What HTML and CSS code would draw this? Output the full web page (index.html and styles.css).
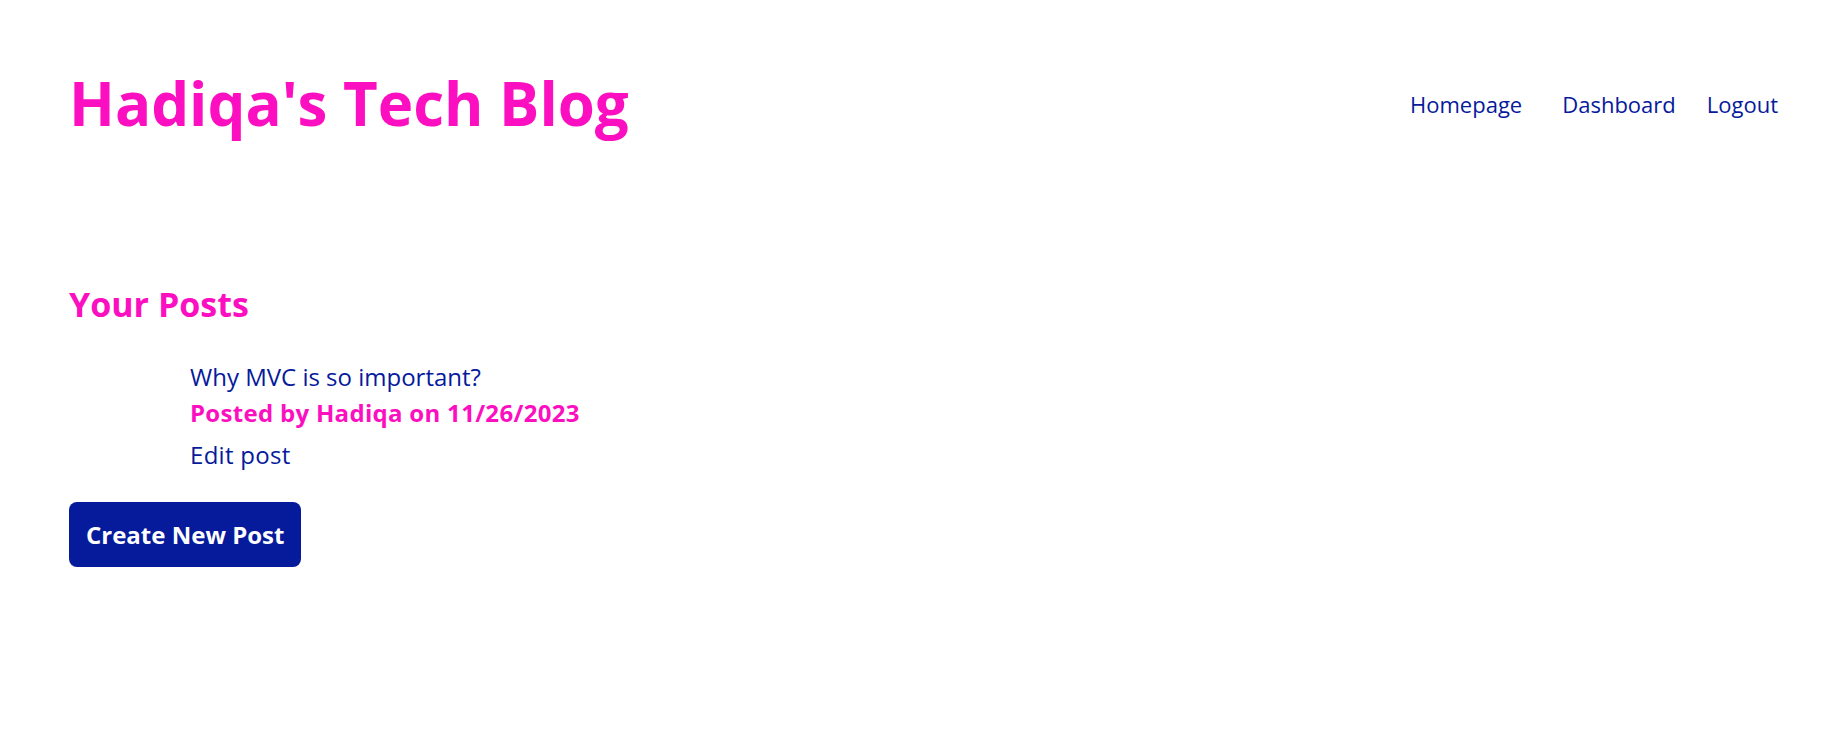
FILE: index.html
```html
<!DOCTYPE html>
<html lang="en">
<head>
<meta charset="utf-8">
<title>Hadiqa's Tech Blog</title>
<link rel="stylesheet" href="styles.css">
</head>
<body>
<header class="site-header">
  <h1 class="brand">Hadiqa's Tech Blog</h1>
  <nav class="nav">
    <a class="nav-link nav-home" href="#">Homepage</a>
    <a class="nav-link nav-dash" href="#">Dashboard</a>
    <a class="nav-link" href="#">Logout</a>
  </nav>
</header>
<main class="content">
  <h2 class="section-title">Your Posts</h2>
  <ul class="post-list">
    <li class="post">
      <a class="post-title" href="#">Why MVC is so important?</a>
      <p class="post-meta">Posted by Hadiqa on 11/26/2023</p>
      <a class="post-edit" href="#">Edit post</a>
    </li>
  </ul>
  <button class="btn" type="button">Create New Post</button>
</main>
</body>
</html>
```
FILE: styles.css
```css
* { box-sizing: border-box; }
body {
  margin: 0;
  background: #ffffff;
  font-family: "Comic Sans MS", "Open Sans", sans-serif;
  color: #061a9c;
}
.site-header {
  display: flex;
  justify-content: space-between;
  align-items: flex-start;
  padding: 73px 55px 0 69px;
}
.brand {
  margin: 0;
  font-size: 60px;
  line-height: 60px;
  font-weight: 700;
  color: #fc0fc0;
}
.nav {
  display: flex;
  margin-top: 19px;
}
.nav-link {
  font-size: 22px;
  line-height: 24px;
  color: #061a9c;
  text-decoration: none;
}
.nav-home { margin-right: 40px; }
.nav-dash { margin-right: 31px; }
.content {
  padding: 0 69px;
}
.section-title {
  margin: 154px 0 0;
  font-size: 34px;
  line-height: 34px;
  font-weight: 700;
  color: #fc0fc0;
}
.post-list {
  list-style: none;
  margin: 44px 0 0;
  padding: 0 0 0 121px;
}
.post {
  display: flex;
  flex-direction: column;
  align-items: flex-start;
}
.post-title {
  font-size: 24px;
  line-height: 24px;
  color: #061a9c;
  text-decoration: none;
}
.post-meta {
  margin: 12px 0 0;
  font-size: 24px;
  line-height: 24px;
  font-weight: 700;
  letter-spacing: 0.3px;
  color: #fc0fc0;
}
.post-edit {
  margin-top: 18px;
  font-size: 24px;
  line-height: 24px;
  letter-spacing: 0.3px;
  color: #061a9c;
  text-decoration: none;
}
.btn {
  display: block;
  margin-top: 35px;
  padding: 21px 17px 20px;
  border: none;
  border-radius: 8px;
  background: #061a9c;
  color: #ffffff;
  font-family: inherit;
  font-size: 24px;
  line-height: 24px;
  font-weight: 700;
}
```
